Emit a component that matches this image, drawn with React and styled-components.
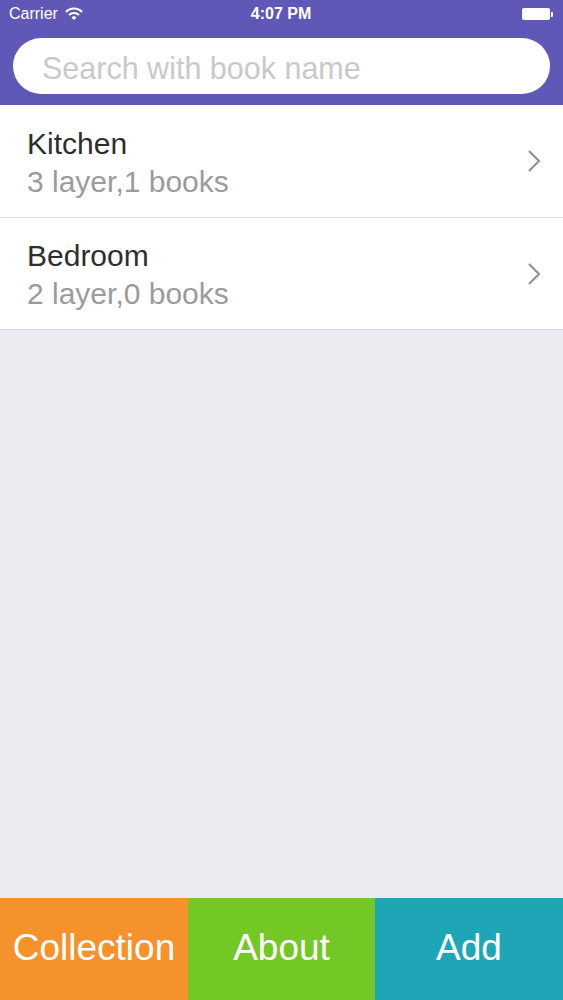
import React from "react";
import styled, { createGlobalStyle } from "styled-components";

const GlobalStyle = createGlobalStyle`
  html, body {
    margin: 0;
    padding: 0;
    background: #ebeaf0;
  }
  * {
    box-sizing: border-box;
  }
`;

const Screen = styled.div`
  width: 563px;
  height: 1000px;
  display: flex;
  flex-direction: column;
  background: #ebeaf0;
  font-family: "Liberation Sans", Arial, sans-serif;
  overflow: hidden;
`;

const Header = styled.div`
  background: #5f58b6;
  height: 105px;
  display: flex;
  flex-direction: column;
`;

const StatusBar = styled.div`
  height: 32px;
  display: grid;
  grid-template-columns: 1fr auto 1fr;
  align-items: center;
  padding: 0 10px 4px 9px;
  color: #fff;
  font-size: 16px;
`;

const Carrier = styled.div`
  display: flex;
  align-items: center;
  gap: 7px;
`;

const Clock = styled.div`
  font-size: 16px;
  font-weight: bold;
`;

const Battery = styled.div`
  justify-self: end;
  display: flex;
  align-items: center;
`;

const BatteryBody = styled.div`
  width: 28px;
  height: 12px;
  background: #fff;
  border-radius: 2px;
`;

const BatteryTip = styled.div`
  width: 2px;
  height: 5px;
  margin-left: 1px;
  background: #fff;
  border-radius: 0 1px 1px 0;
`;

const SearchWrap = styled.div`
  padding: 6px 13px 0;
`;

const SearchInput = styled.input`
  width: 100%;
  height: 56px;
  border: none;
  outline: none;
  border-radius: 28px;
  background: #fff;
  padding: 4px 28px 0 29px;
  font-family: "Liberation Sans", Arial, sans-serif;
  font-size: 30.5px;
  color: #333;

  &::placeholder {
    color: #c9c9cc;
  }
`;

const List = styled.div`
  background: #fff;
  border-bottom: 1px solid #d8d8dc;
`;

const Row = styled.div`
  height: 112px;
  display: flex;
  align-items: center;
  padding: 0 21px 0 27px;
  border-top: ${(p) => (p.$first ? "none" : "1px solid #e4e4e8")};
`;

const RowText = styled.div`
  flex: 1;
  display: flex;
  flex-direction: column;
  gap: 4px;
  padding-top: 3px;
`;

const Title = styled.div`
  font-size: 30px;
  color: #2e2e2e;
  line-height: 34px;
`;

const Subtitle = styled.div`
  font-size: 30px;
  color: #9b9b9b;
  line-height: 34px;
`;

const Spacer = styled.div`
  flex: 1;
`;

const TabBar = styled.div`
  height: 102px;
  display: grid;
  grid-template-columns: 188px 187px 188px;
`;

const Tab = styled.div`
  background: ${(p) => p.$color};
  color: #fff;
  font-size: 37px;
  display: flex;
  align-items: center;
  justify-content: center;
  padding-bottom: 2px;
`;

const Chevron = () => (
  <svg width="16" height="24" viewBox="0 0 16 24">
    <path d="M3 2 L13 12 L3 22" fill="none" stroke="#929292" strokeWidth="2.2" />
  </svg>
);

const Wifi = () => (
  <svg width="18" height="14" viewBox="0 0 18 14">
    <path d="M1 5 A11 11 0 0 1 17 5" fill="none" stroke="#fff" strokeWidth="2" />
    <path d="M4 8 A7 7 0 0 1 14 8" fill="none" stroke="#fff" strokeWidth="2" />
    <path d="M9 13 L6.5 10.5 A3.5 3.5 0 0 1 11.5 10.5 Z" fill="#fff" />
  </svg>
);

const rooms = [
  { name: "Kitchen", info: "3 layer,1 books" },
  { name: "Bedroom", info: "2 layer,0 books" },
];

const App = () => {
  return (
    <Screen>
      <GlobalStyle />
      <Header>
        <StatusBar>
          <Carrier>
            Carrier <Wifi />
          </Carrier>
          <Clock>4:07 PM</Clock>
          <Battery>
            <BatteryBody />
            <BatteryTip />
          </Battery>
        </StatusBar>
        <SearchWrap>
          <SearchInput placeholder="Search with book name" />
        </SearchWrap>
      </Header>
      <List>
        {rooms.map((r, i) => (
          <Row key={r.name} $first={i === 0}>
            <RowText>
              <Title>{r.name}</Title>
              <Subtitle>{r.info}</Subtitle>
            </RowText>
            <Chevron />
          </Row>
        ))}
      </List>
      <Spacer />
      <TabBar>
        <Tab $color="#f5922b">Collection</Tab>
        <Tab $color="#74c825">About</Tab>
        <Tab $color="#1fa6b6">Add</Tab>
      </TabBar>
    </Screen>
  );
};

export default App;
